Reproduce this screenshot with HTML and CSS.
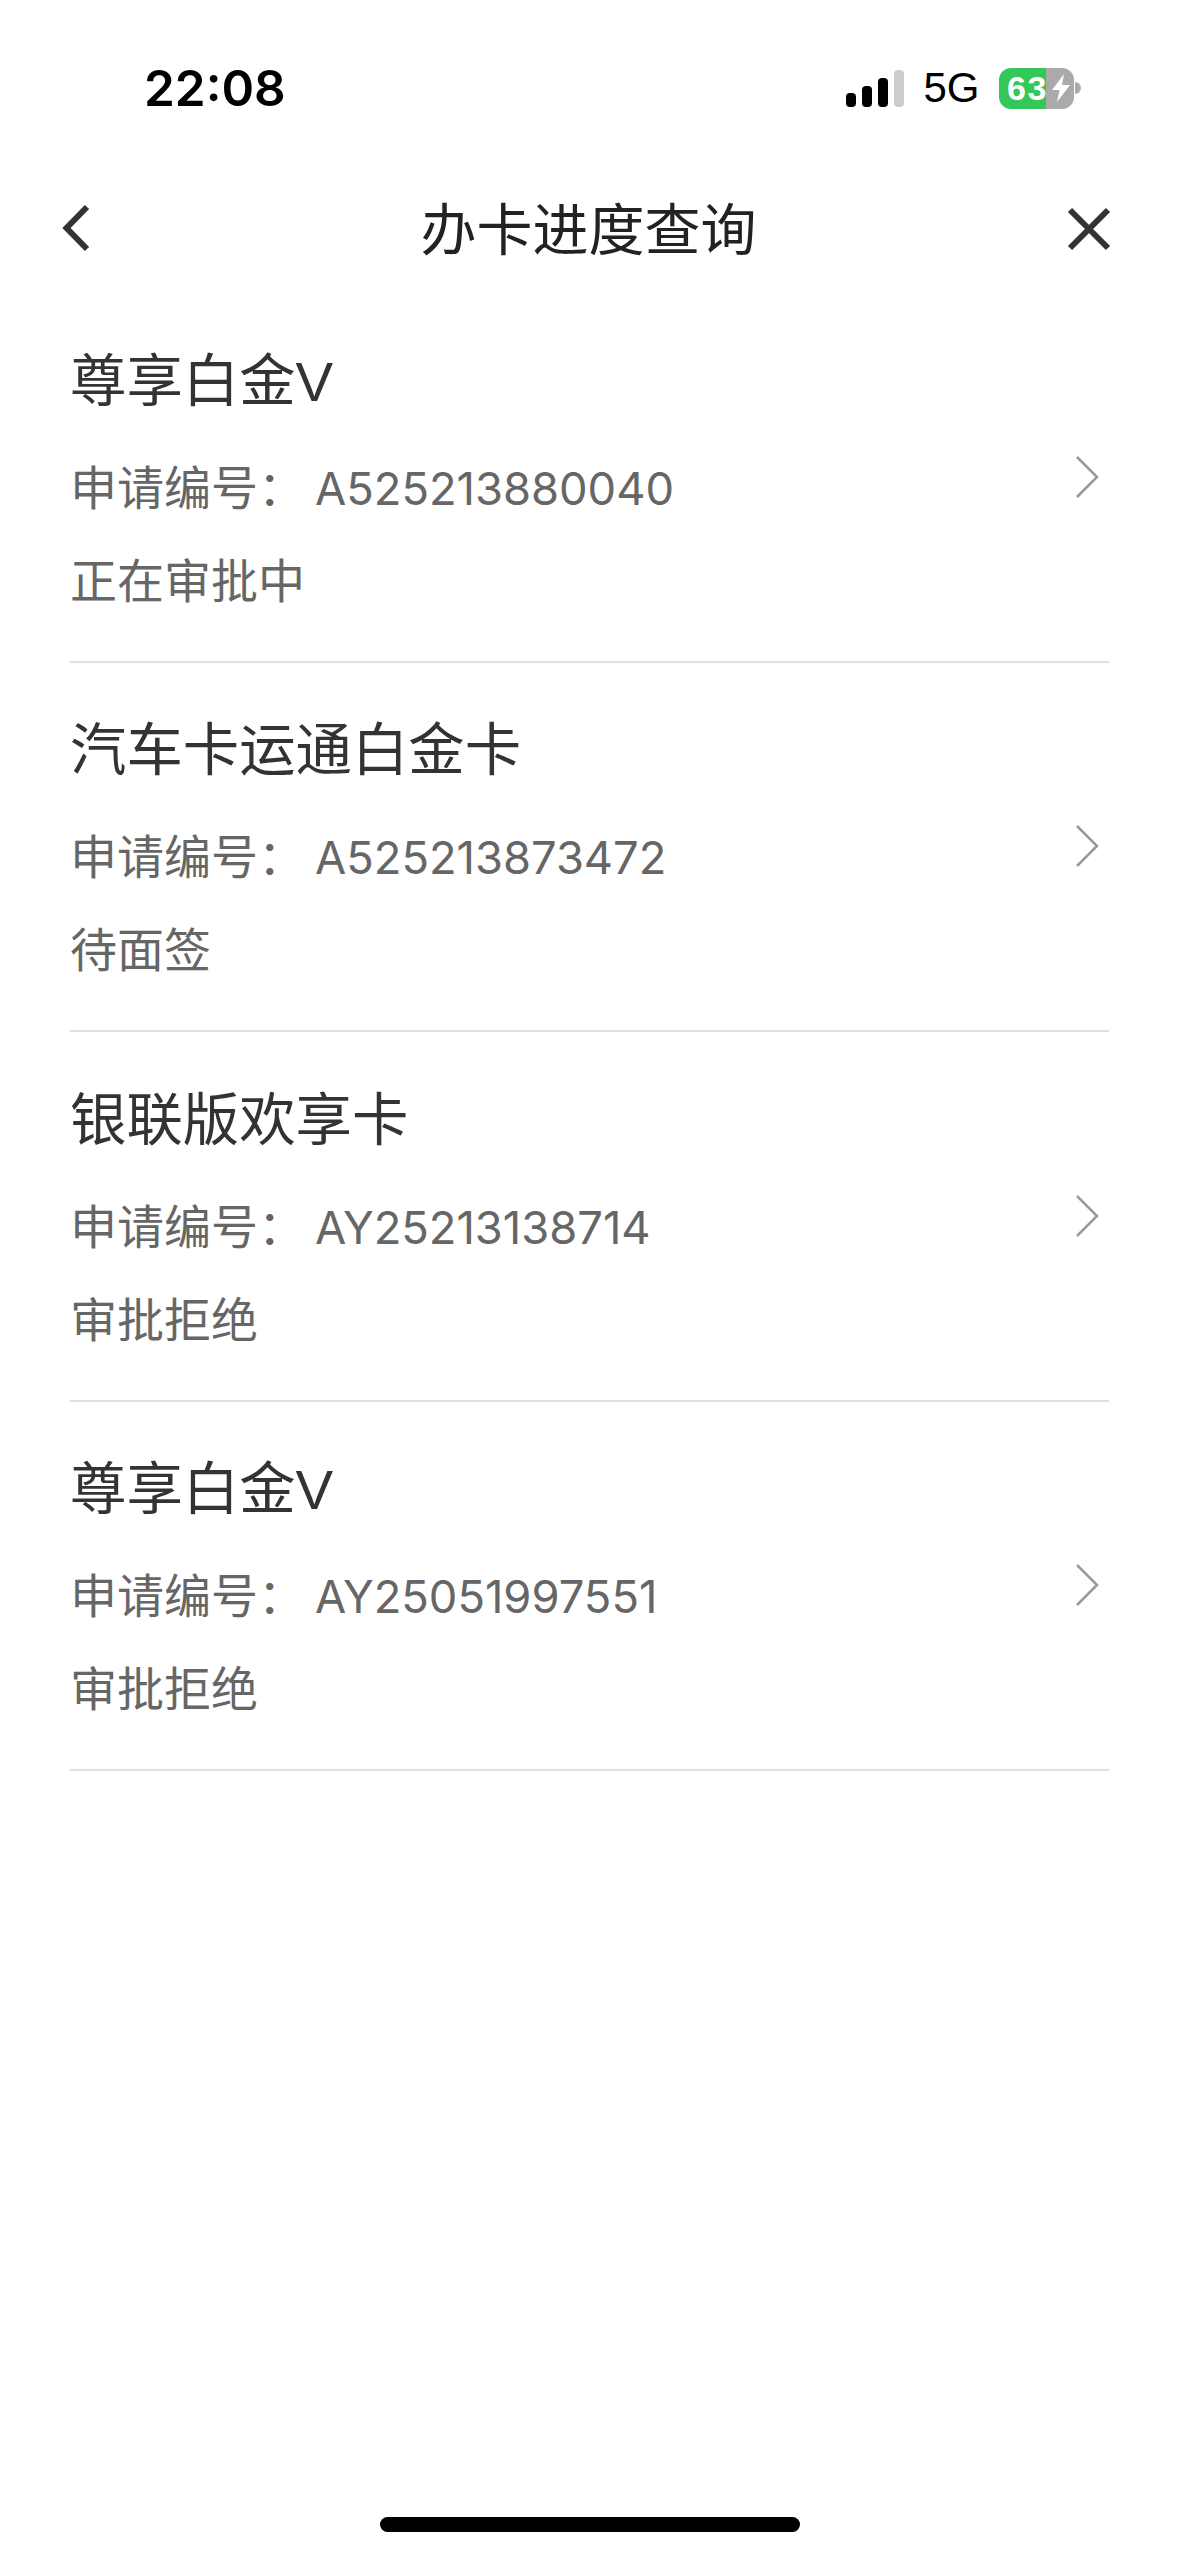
FILE: index.html
```html
<!DOCTYPE html>
<html lang="zh-CN">
<head>
  <meta charset="UTF-8" />
  <meta name="viewport" content="width=device-width, initial-scale=1.0"/>
  <title>办卡进度查询</title>
  <link rel="stylesheet" href="styles.css">
</head>
<body>
  <div class="page">

    <div class="status-bar">
      <div class="time">22:08</div>
      <div class="status-right">
        <div class="signal">
          <span class="bar bar1"></span>
          <span class="bar bar2"></span>
          <span class="bar bar3"></span>
          <span class="bar bar4"></span>
        </div>
        <div class="network">5G</div>
        <div class="battery">
          <div class="battery-body">
            <span class="battery-num">63</span>
            <svg class="bolt" width="18" height="28" viewBox="0 0 18 28">
              <path d="M12 0 L0 16 L7.5 16 L5 28 L18 11 L10 11 Z" fill="#fff"/>
            </svg>
          </div>
          <div class="battery-nub"></div>
        </div>
      </div>
    </div>

    <div class="nav">
      <svg class="nav-icon" width="48" height="48" viewBox="0 0 48 48">
        <path d="M35 3 L14.5 24 L35 45" fill="none" stroke="#333" stroke-width="6"/>
      </svg>
      <div class="nav-title">办卡进度查询</div>
      <svg class="nav-icon" width="48" height="48" viewBox="0 0 48 48">
        <path d="M6 6 L44 44 M44 6 L6 44" fill="none" stroke="#333" stroke-width="6"/>
      </svg>
    </div>

    <div class="list">
      <div class="item">
        <div class="item-text">
          <div class="card-name">尊享白金V</div>
          <div class="apply-no"><span class="apply-label">申请编号：</span>A525213880040</div>
          <div class="apply-state">正在审批中</div>
        </div>
        <svg class="arrow" width="24" height="44" viewBox="0 0 24 44">
          <path d="M2 2 L22 22 L2 42" fill="none" stroke="#999" stroke-width="2.5"/>
        </svg>
      </div>
      <div class="item">
        <div class="item-text">
          <div class="card-name">汽车卡运通白金卡</div>
          <div class="apply-no"><span class="apply-label">申请编号：</span>A525213873472</div>
          <div class="apply-state">待面签</div>
        </div>
        <svg class="arrow" width="24" height="44" viewBox="0 0 24 44">
          <path d="M2 2 L22 22 L2 42" fill="none" stroke="#999" stroke-width="2.5"/>
        </svg>
      </div>
      <div class="item">
        <div class="item-text">
          <div class="card-name">银联版欢享卡</div>
          <div class="apply-no"><span class="apply-label">申请编号：</span>AY25213138714</div>
          <div class="apply-state">审批拒绝</div>
        </div>
        <svg class="arrow" width="24" height="44" viewBox="0 0 24 44">
          <path d="M2 2 L22 22 L2 42" fill="none" stroke="#999" stroke-width="2.5"/>
        </svg>
      </div>
      <div class="item">
        <div class="item-text">
          <div class="card-name">尊享白金V</div>
          <div class="apply-no"><span class="apply-label">申请编号：</span>AY25051997551</div>
          <div class="apply-state">审批拒绝</div>
        </div>
        <svg class="arrow" width="24" height="44" viewBox="0 0 24 44">
          <path d="M2 2 L22 22 L2 42" fill="none" stroke="#999" stroke-width="2.5"/>
        </svg>
      </div>
    </div>

    <div class="home-bar"></div>
  </div>
</body>
</html>
```

FILE: styles.css
```css
* {
  box-sizing: border-box;
}

body {
  margin: 0;
  background: #fff;
  font-family: "Liberation Sans", "Noto Sans CJK SC", sans-serif;
}

.page {
  height: 2556px;
  display: flex;
  flex-direction: column;
  overflow: hidden;
}

.status-bar {
  height: 165px;
  padding: 60px 98px 0 144px;
  display: flex;
  justify-content: space-between;
  align-items: flex-start;
}

.time {
  font-family: Inter, "Liberation Sans", sans-serif;
  font-size: 49.5px;
  line-height: 56px;
  font-weight: 600;
  color: #000;
}

.status-right {
  display: flex;
  align-items: center;
  height: 56px;
}

.signal {
  display: flex;
  align-items: flex-end;
  gap: 6px;
  height: 37px;
}

.bar {
  width: 10px;
  background: #000;
  border-radius: 4px;
}

.bar1 { height: 14px; }
.bar2 { height: 21px; }
.bar3 { height: 29px; }
.bar4 { height: 37px; background: #ccc; }

.network {
  margin-left: 19.5px;
  font-size: 42px;
  line-height: 56px;
  color: #000;
}

.battery {
  margin-left: 19.5px;
  display: flex;
  align-items: center;
  gap: 1px;
}

.battery-body {
  width: 75px;
  height: 41px;
  border-radius: 12px;
  padding-left: 8px;
  display: flex;
  align-items: center;
  background: linear-gradient(to right, #34c759 47px, #aaa 47px);
}

.battery-num {
  font-size: 34px;
  line-height: 41px;
  font-weight: bold;
  color: #fff;
  letter-spacing: 1.5px;
}

.bolt {
  margin-left: 4px;
}

.battery-nub {
  width: 6px;
  height: 12px;
  background: #aaa;
  border-radius: 0 6px 6px 0;
}

.nav {
  height: 126px;
  margin-bottom: 2px;
  padding: 0 67px 0 52px;
  display: flex;
  justify-content: space-between;
  align-items: center;
}

.nav-title {
  font-size: 56px;
  color: #222;
  margin-left: 13px;
  padding-bottom: 6px;
}

.list {
  margin: 0 70px;
}

.item {
  height: 369.5px;
  padding: 0 10px 0 0;
  display: flex;
  justify-content: space-between;
  align-items: center;
  border-bottom: 2px solid #e0e0e0;
}

.card-name {
  font-size: 56.4px;
  line-height: 80px;
  color: #333;
  margin-top: 7px;
}

.apply-no {
  margin-top: 33px;
  font-family: Inter, "Liberation Sans", sans-serif;
  font-size: 45.3px;
  line-height: 60px;
  color: #666;
}

.apply-label {
  font-family: "Noto Sans CJK SC", sans-serif;
  font-size: 47px;
  margin-right: 10px;
}

.apply-state {
  margin-top: 33px;
  margin-bottom: 7px;
  font-size: 47px;
  line-height: 60px;
  color: #666;
}

.home-bar {
  width: 420px;
  height: 15px;
  margin: auto auto 24px;
  background: #000;
  border-radius: 8px;
}
```
